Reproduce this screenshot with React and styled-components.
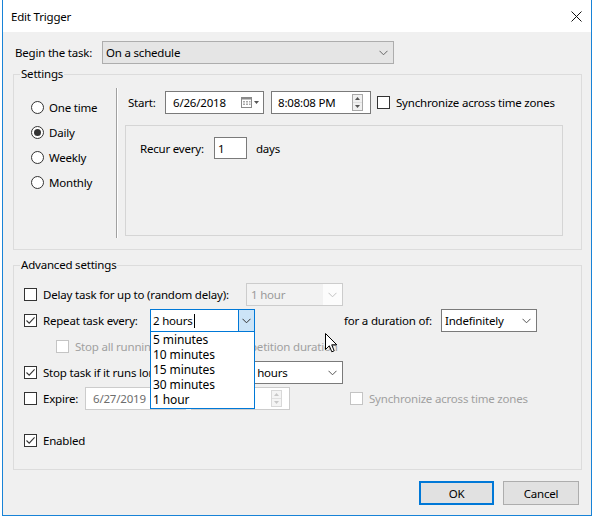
import React from 'react';
import styled, { createGlobalStyle } from 'styled-components';

const Global = createGlobalStyle`
  html, body { margin: 0; padding: 0; background: #ffffff; }
  body {
    font-family: "Segoe UI", "Noto Sans", "Open Sans", sans-serif;
    font-size: 11.5px;
    letter-spacing: -0.2px;
    color: #000;
  }
  * { box-sizing: border-box; }
`;

const Window = styled.div`
  position: relative;
  margin-left: 2px;
  width: 590px;
  height: 516px;
  border: 1px solid #1883d7;
  border-top: none;
  background: #f0f0f0;
  display: flex;
  flex-direction: column;
`;

const TitleBar = styled.div`
  height: 32px;
  background: #ffffff;
  display: flex;
  align-items: center;
  justify-content: space-between;
  padding: 0 9px 0 8px;
`;

const Body = styled.div`
  flex: 1;
  display: flex;
  flex-direction: column;
  padding: 9px 9px 0 10px;
`;

const Row = styled.div`
  display: flex;
  align-items: center;
  height: ${p => p.$h || 23}px;
  margin-top: ${p => p.$mt || 0}px;
  padding-left: ${p => p.$pl || 0}px;
  white-space: nowrap;
`;

const Label = styled.span`
  display: inline-block;
  width: ${p => (p.$w ? `${p.$w}px` : 'auto')};
  margin-left: ${p => p.$ml || 0}px;
  color: ${p => (p.$disabled ? '#a0a0a0' : '#000')};
  flex-shrink: 0;
  white-space: nowrap;
`;

const Group = styled.fieldset`
  margin: ${p => p.$mt || 0}px 0 0 0;
  padding: 0;
  border: 1px solid #dcdcdc;
  min-width: 0;
`;

const Legend = styled.legend`
  margin-left: 6px;
  padding: 0 1px;
  line-height: 16px;
`;

const SettingsInner = styled.div`
  display: flex;
  height: 167px;
`;

const RadioColumn = styled.div`
  width: 102px;
  flex-shrink: 0;
  padding: 13px 0 0 17px;
  display: flex;
  flex-direction: column;
`;

const RadioRow = styled.div`
  display: flex;
  align-items: center;
  height: 25px;
`;

const RadioCircle = styled.span`
  width: 13px;
  height: 13px;
  border: 1px solid #333;
  border-radius: 50%;
  background: #fff;
  display: flex;
  align-items: center;
  justify-content: center;
  flex-shrink: 0;
  &::after {
    content: '';
    width: 7px;
    height: 7px;
    border-radius: 50%;
    background: ${p => (p.$on ? '#333' : 'transparent')};
  }
`;

const VSeparator = styled.div`
  width: 1px;
  flex-shrink: 0;
  background: #a0a0a0;
  margin: 6px 0 11px 0;
  box-shadow: 1px 0 0 #ffffff;
`;

const RightColumn = styled.div`
  flex: 1;
  min-width: 0;
  display: flex;
  flex-direction: column;
  padding: 9px 18px 0 11px;
`;

const Field = styled.div`
  position: relative;
  width: ${p => p.$w}px;
  height: ${p => p.$h || 23}px;
  border: 1px solid ${p => p.$border || '#7a7a7a'};
  background: ${p => p.$bg || '#ffffff'};
  display: flex;
  align-items: center;
  margin-left: ${p => p.$ml || 0}px;
  flex-shrink: 0;
  color: ${p => (p.$disabled ? '#6d6d6d' : '#000')};
`;

const FieldText = styled.span`
  flex: 1;
  padding-left: ${p => p.$pl ?? 7}px;
  white-space: nowrap;
  overflow: hidden;
  align-self: stretch;
  display: flex;
  align-items: center;
  color: ${p => p.$color || 'inherit'};
  background: ${p => p.$bg || 'transparent'};
`;

const ArrowArea = styled.span`
  width: ${p => p.$w || 18}px;
  align-self: stretch;
  display: flex;
  align-items: center;
  justify-content: center;
  background: ${p => p.$bg || 'transparent'};
  border-left: ${p => (p.$line ? `1px solid ${p.$line}` : 'none')};
  flex-shrink: 0;
`;

const Caret = styled.span`
  display: inline-block;
  width: 1px;
  height: 14px;
  background: #000;
  margin-left: 1px;
`;

const Spinner = styled.span`
  display: flex;
  flex-direction: column;
  width: 11px;
  height: 17px;
  margin-right: 7px;
  border: 1px solid ${p => (p.$disabled ? '#d8d8d8' : '#a8a8a8')};
  background: ${p => (p.$disabled ? '#f4f4f4' : '#f0f0f0')};
`;

const SpinHalf = styled.span`
  flex: 1;
  display: flex;
  align-items: center;
  justify-content: center;
  & + & { border-top: 1px solid ${p => (p.$disabled ? '#e0e0e0' : '#c8c8c8')}; }
`;

const Box = styled.span`
  width: 13px;
  height: 13px;
  border: 1px solid ${p => (p.$disabled ? '#c4c4c4' : '#333')};
  background: #fff;
  display: flex;
  align-items: center;
  justify-content: center;
  flex-shrink: 0;
  margin-left: ${p => p.$ml || 0}px;
`;

const RecurPanel = styled.div`
  margin: 11px 0 0 -3px;
  height: 111px;
  border: 1px solid #d5d5d5;
  padding: 11px 0 0 14px;
`;

const AdvancedInner = styled.div`
  display: flex;
  flex-direction: column;
  gap: 3px;
  padding: 10px 0 17px 10px;
`;

const ComboWrap = styled.div`
  position: relative;
  flex-shrink: 0;
`;

const DropList = styled.div`
  position: absolute;
  left: 0;
  top: 22px;
  width: 105px;
  height: 78px;
  background: #ffffff;
  border: 1px solid #0078d7;
  z-index: 5;
`;

const DropItem = styled.div`
  height: 15px;
  line-height: 15px;
  padding-left: 2px;
  white-space: nowrap;
  font-size: 12px;
  letter-spacing: -0.1px;
`;

const Footer = styled.div`
  display: flex;
  justify-content: flex-end;
  gap: 9px;
  margin-top: 11px;
  padding-right: 3px;
`;

const Button = styled.div`
  width: ${p => p.$w}px;
  height: 24px;
  background: #e1e1e1;
  border: ${p => (p.$default ? '2px solid #0078d7' : '1px solid #adadad')};
  display: flex;
  align-items: center;
  justify-content: center;
`;

const Cursor = styled.svg`
  position: absolute;
  left: 322px;
  top: 333px;
  z-index: 10;
`;

const Chevron = ({ color = '#444' }) => (
  <svg width="9" height="6" viewBox="0 0 9 6">
    <path d="M0.5 0.8 L4.5 4.8 L8.5 0.8" fill="none" stroke={color} strokeWidth="1" />
  </svg>
);

const Tick = () => (
  <svg width="11" height="11" viewBox="0 0 11 11">
    <path d="M1.5 5.5 L4.2 8.2 L9.6 2.4" fill="none" stroke="#333" strokeWidth="1.1" />
  </svg>
);

const Check = ({ on, disabled, ml }) => (
  <Box $disabled={disabled} $ml={ml}>{on && <Tick />}</Box>
);

const Radio = ({ on, label }) => (
  <RadioRow>
    <RadioCircle $on={on} />
    <Label $ml={5}>{label}</Label>
  </RadioRow>
);

const SpinBox = ({ disabled }) => {
  const c = disabled ? '#c8c8c8' : '#555';
  return (
    <Spinner $disabled={disabled}>
      <SpinHalf $disabled={disabled}>
        <svg width="5" height="3" viewBox="0 0 5 3"><path d="M0 3 L2.5 0 L5 3 Z" fill={c} /></svg>
      </SpinHalf>
      <SpinHalf $disabled={disabled}>
        <svg width="5" height="3" viewBox="0 0 5 3"><path d="M0 0 L2.5 3 L5 0 Z" fill={c} /></svg>
      </SpinHalf>
    </Spinner>
  );
};

const CalendarIcon = () => (
  <svg width="20" height="12" viewBox="0 0 20 12">
    <rect x="0.5" y="0.5" width="10" height="10" fill="#fff" stroke="#8a8a8a" />
    <rect x="0.5" y="0.5" width="10" height="2" fill="#8a8a8a" />
    <g fill="#a8a8a8">
      <rect x="2" y="4" width="2" height="1.5" />
      <rect x="5" y="4" width="2" height="1.5" />
      <rect x="8" y="4" width="1.5" height="1.5" />
      <rect x="2" y="6.5" width="2" height="1.5" />
      <rect x="5" y="6.5" width="2" height="1.5" />
      <rect x="8" y="6.5" width="1.5" height="1.5" />
    </g>
    <path d="M13 4 L18 4 L15.5 7 Z" fill="#555" />
  </svg>
);

const CloseIcon = () => (
  <svg width="11" height="11" viewBox="0 0 11 11">
    <path d="M0.5 0.5 L10.5 10.5 M10.5 0.5 L0.5 10.5" stroke="#111" strokeWidth="1" />
  </svg>
);

export default function App() {
  return (
    <>
      <Global />
      <Window>
        <TitleBar>
          <span>Edit Trigger</span>
          <CloseIcon />
        </TitleBar>
        <Body>
          <Row $pl={2}>
            <Label $w={87}>Begin the task:</Label>
            <Field $w={292} $border="#adadad" $bg="#e5e5e5">
              <FieldText $pl={3}>On a schedule</FieldText>
              <ArrowArea $w={20}><Chevron color="#666" /></ArrowArea>
            </Field>
          </Row>

          <Group $mt={2}>
            <Legend>Settings</Legend>
            <SettingsInner>
              <RadioColumn>
                <Radio label="One time" />
                <Radio on label="Daily" />
                <Radio label="Weekly" />
                <Radio label="Monthly" />
              </RadioColumn>
              <VSeparator />
              <RightColumn>
                <Row>
                  <Label $w={37}>Start:</Label>
                  <Field $w={99}>
                    <FieldText>6/26/2018</FieldText>
                    <ArrowArea $w={24}><CalendarIcon /></ArrowArea>
                  </Field>
                  <Field $w={100} $ml={7}>
                    <FieldText $pl={6}>8:08:08 PM</FieldText>
                    <SpinBox />
                  </Field>
                  <Check ml={6} />
                  <Label $ml={6}>Synchronize across time zones</Label>
                </Row>
                <RecurPanel>
                  <Row $h={22}>
                    <Label $w={74}>Recur every:</Label>
                    <Field $w={33} $h={22}>
                      <FieldText $pl={3}>1</FieldText>
                    </Field>
                    <Label $ml={9}>days</Label>
                  </Row>
                </RecurPanel>
              </RightColumn>
            </SettingsInner>
          </Group>

          <Group $mt={7}>
            <Legend>Advanced settings</Legend>
            <AdvancedInner>
              <Row>
                <Check />
                <Label $ml={6} $w={203}>Delay task for up to (random delay):</Label>
                <Field $w={97} $border="#cccccc" $bg="#fcfcfc" $disabled>
                  <FieldText $pl={4} $color="#9a9a9a" $bg="#f2f2f2">1 hour</FieldText>
                  <ArrowArea $w={19}><Chevron color="#c2c2c2" /></ArrowArea>
                </Field>
              </Row>
              <Row>
                <Check on />
                <Label $ml={6} $w={107}>Repeat task every:</Label>
                <ComboWrap>
                  <Field $w={105} $border="#0078d7">
                    <FieldText $pl={2}>2 hours<Caret /></FieldText>
                    <ArrowArea $w={16} $bg="#cce4f7" $line="#0078d7"><Chevron color="#333" /></ArrowArea>
                  </Field>
                  <DropList>
                    {['5 minutes', '10 minutes', '15 minutes', '30 minutes', '1 hour'].map(t => (
                      <DropItem key={t}>{t}</DropItem>
                    ))}
                  </DropList>
                </ComboWrap>
                <Label $ml={89} $w={97}>for a duration of:</Label>
                <Field $w={96}>
                  <FieldText $pl={3}>Indefinitely</FieldText>
                  <ArrowArea $w={20}><Chevron color="#555" /></ArrowArea>
                </Field>
              </Row>
              <Row $pl={32}>
                <Check disabled />
                <Label $ml={6} $disabled>Stop all running tasks at end of repetition duration</Label>
              </Row>
              <Row>
                <Check on />
                <Label $ml={6} $w={203}>Stop task if it runs longer than:</Label>
                <Field $w={97}>
                  <FieldText $pl={1}>2 hours</FieldText>
                  <ArrowArea $w={20}><Chevron color="#555" /></ArrowArea>
                </Field>
              </Row>
              <Row>
                <Check />
                <Label $ml={6} $w={42}>Expire:</Label>
                <Field $w={101} $border="#cccccc" $disabled>
                  <FieldText>6/27/2019</FieldText>
                </Field>
                <Field $w={99} $ml={5} $border="#cccccc" $disabled>
                  <FieldText $pl={6}>8:08:08 PM</FieldText>
                  <SpinBox disabled />
                </Field>
                <Check disabled ml={60} />
                <Label $ml={6} $disabled>Synchronize across time zones</Label>
              </Row>
              <Row $mt={16}>
                <Check on />
                <Label $ml={6}>Enabled</Label>
              </Row>
            </AdvancedInner>
          </Group>

          <Footer>
            <Button $w={75} $default>OK</Button>
            <Button $w={76}>Cancel</Button>
          </Footer>
        </Body>
        <Cursor width="14" height="21" viewBox="0 0 14 21">
          <path d="M0.5 0.5 L0.5 16.5 L4.3 12.8 L6.8 18.8 L9.2 17.8 L6.7 11.8 L11.8 11.8 Z" fill="#fff" stroke="#000" strokeWidth="1" strokeLinejoin="miter" />
        </Cursor>
      </Window>
    </>
  );
}
